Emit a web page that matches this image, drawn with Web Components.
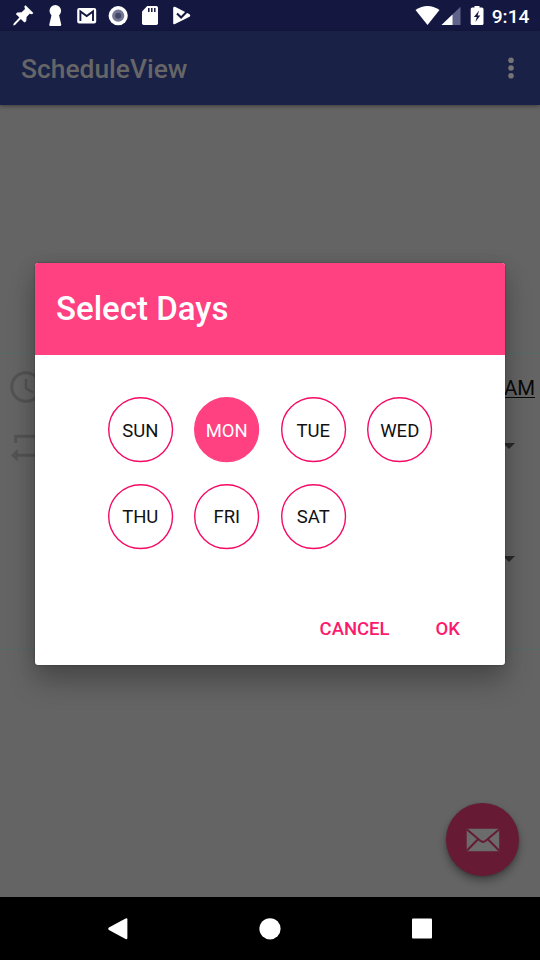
<!DOCTYPE html>
<html lang="en">
<head>
<meta charset="utf-8">
<title>ScheduleView</title>
<style>
html,body{margin:0;padding:0;background:#000}
body{width:540px;height:960px;overflow:hidden;font-family:Roboto,"Liberation Sans",sans-serif}
</style>
</head>
<body>
<schedule-app></schedule-app>
<script>
const define = (name, html) => customElements.define(name, class extends HTMLElement {
  constructor() {
    super();
    const t = document.createElement('template');
    t.innerHTML = html;
    this.attachShadow({mode: 'open'}).append(t.content.cloneNode(true));
  }
});

define('status-bar', `
<style>
:host{display:flex;justify-content:space-between;height:31px;background:#141840;color:#fff;padding-left:7px;padding-right:10.5px}
div{display:flex}
svg{display:block;height:31px;fill:#fff}
span{font-size:19.2px;line-height:33px;font-weight:500;margin-left:7px;white-space:nowrap}
</style>
<div>
<svg width="32" viewBox="7 0 32 31"><path d="M25.5 5.2L33.4 13L32 14.3L29.6 13.8L26.6 17L26.2 21.2L24.4 22.4L20.8 19L15 24.9L13.2 25.4L13.7 23.4L19.4 17.6L15.8 14.1L17.3 12.5L21.7 12.2L25 9L24.3 6.5Z"/></svg>
<svg width="32" viewBox="39 0 32 31"><circle cx="55.3" cy="10.8" r="5.8"/><path d="M51.8 14h7L61.2 24.5Q61.4 26 60 26H50.5Q49 26 49.3 24.5Z"/></svg>
<svg width="32" viewBox="71 0 32 31"><rect x="77.2" y="8" width="19" height="15.6" rx="2"/><path d="M80.4 21V11.4L86.7 16L93 11.4V21" fill="none" stroke="#141840" stroke-width="1.9"/></svg>
<svg width="32" viewBox="103 0 32 31"><circle cx="118.2" cy="15.7" r="9.6"/><circle cx="118.2" cy="15.7" r="6.1" fill="#737694"/><circle cx="118.2" cy="15.7" r="3" fill="#434766"/></svg>
<svg width="32" viewBox="135 0 32 31"><path d="M147.2 6H156.3Q158 6 158 7.8V23.3Q158 25 156.3 25H143.7Q142 25 142 23.3V11.4Z"/><path d="M148.8 8v4M151.8 8v4M154.8 8v4" stroke="#141840" stroke-width="1.5"/></svg>
<svg width="32" viewBox="167 0 32 31"><path d="M175 6.8Q173.2 6.4 173.2 8V23Q173.2 24.9 175 24L189.6 16.7Q191 15.5 189.6 14.3Z"/><path d="M177 13.4L181.1 17.4L190 8.5" fill="none" stroke="#141840" stroke-width="2.1"/></svg>
</div>
<div>
<svg width="70" viewBox="415.5 0 70 31"><path d="M416 10Q428 1.8 440 10L428 25Z"/><path d="M461 6.7V25H442Z" fill="#61648a"/><path d="M453 14.4V25H442Z"/><path d="M475 7.4V6h5v1.4h2.4q1.6 0 1.6 1.6v14.5q0 1.5-1.6 1.5h-9.6q-1.6 0-1.6-1.5V9q0-1.6 1.6-1.6Z"/><path d="M479.6 10.4L474.4 17H477.3L475.9 22L480.8 15.5H478.1Z" fill="#141840"/></svg>
<span>9:14</span>
</div>`);

define('app-bar', `
<style>
:host{display:flex;align-items:center;justify-content:space-between;height:74px;box-sizing:border-box;padding:2px 23px 0 21px;background:#1a2147;box-shadow:0 1px 4px #0006;z-index:1}
h1{margin:0;font-size:26.4px;font-weight:500;line-height:32px;color:#666;white-space:nowrap}
svg{display:block;fill:#747474}
</style>
<h1><slot></slot></h1>
<svg width="12" height="26" viewBox="0 0 12 26"><circle cx="6" cy="4.2" r="2.8"/><circle cx="6" cy="12" r="2.8"/><circle cx="6" cy="19.8" r="2.8"/></svg>`);

define('schedule-row', `
<style>:host{display:flex;justify-content:space-between;align-items:center;height:var(--h,58px);padding:0 5px 0 9px}</style>
<slot></slot>`);

define('caret-icon', `
<style>:host{display:block;margin-right:20px}svg{display:block;fill:#292929}</style>
<svg width="12" height="6" viewBox="0 0 12 6"><path d="M0 0H12L6 6Z"/></svg>`);

define('schedule-panel', `
<style>
:host{display:block;box-sizing:border-box;height:297px;border:solid #536a67;border-width:1px 0;padding-top:4px}
svg{display:block;fill:none;stroke:#535353;stroke-width:3}
span{font-size:20.4px;color:#0a0a0a;border-bottom:1px solid #0a0a0a;height:20px;line-height:22px;white-space:nowrap;margin-top:1px}
.repeat{--h:60px}
.third{--h:166px}
</style>
<schedule-row><svg width="34" height="34" viewBox="0 0 34 34"><circle cx="17" cy="17" r="14.3"/><path d="M17 9V18.3L24 22.5" stroke-width="2.4"/></svg><span>AM</span></schedule-row>
<schedule-row class="repeat"><svg width="34" height="34" viewBox="0 0 34 34"><path d="M6.7 14V7.3H28M7 26.2H28V20" /><path d="M2 26.2L8.7 20V32.4ZM26 1L32 7.3L26 13.6Z" fill="#535353" stroke="none"/></svg><caret-icon></caret-icon></schedule-row>
<schedule-row class="third"><i></i><caret-icon></caret-icon></schedule-row>`);

define('mail-fab', `
<style>
:host{display:grid;place-items:center;width:73px;height:73px;border-radius:50%;background:#661a33;box-shadow:0 5px 9px #0005,0 1px 3px #0003}
svg{display:block}
</style>
<svg width="34" height="24" viewBox="0 0 34 24"><rect x=".7" y=".8" width="32.5" height="22.4" rx="1" fill="#6b6b6b"/><path d="M1 1.5L14.3 12.8Q17 15 19.7 12.8L33 1.5M1 22.5L11.8 11.5M33 22.5L22.2 11.5" fill="none" stroke="#661a33" stroke-width="2"/></svg>`);

define('day-toggle', `
<style>
:host{display:grid;place-items:center;width:65.5px;height:65.5px;color:#111;font-size:18.5px;line-height:22px}
svg,span{grid-area:1/1}
span{padding-top:2px}
svg{display:block;overflow:visible;fill:none;stroke:#f50a64;stroke-width:1.4}
:host([selected]){color:#fff}
:host([selected]) svg{fill:#ff4081;stroke:#ff4081}
</style>
<svg width="65.5" height="65.5" viewBox="0 0 65.5 65.5"><circle cx="32.6" cy="32.6" r="31.9"/></svg>
<span><slot></slot></span>`);

define('flat-button', `
<style>:host{display:block;color:#fb1a6c;font-size:18.5px;line-height:22px;font-weight:500;white-space:nowrap}</style>
<slot></slot>`);

define('days-dialog', `
<style>
:host{display:flex;flex-direction:column;width:470px;height:402px;background:#fff;border-radius:3px;overflow:hidden;box-shadow:0 18px 28px #00000038,0 4px 20px #00000024,0 0 2px #0006}
header{height:92px;box-sizing:border-box;background:#ff4081;color:#fff;padding:26px 21px 0;font-size:33px;line-height:40px;font-weight:500;white-space:nowrap}
main{flex:1;display:grid;grid-template-columns:repeat(4,65.5px);grid-auto-rows:65.5px;gap:21px;padding:42px 0 0 72.5px}
footer{display:flex;justify-content:flex-end;gap:46px;padding:0 45px 25px 0}
</style>
<header><slot name="title"></slot></header>
<main><slot></slot></main>
<footer><slot name="actions"></slot></footer>`);

define('nav-bar', `
<style>
:host{display:flex;justify-content:center;align-items:center;gap:130px;height:63px;background:#000}
svg{display:block;fill:#fff}
</style>
<svg width="22" height="24" viewBox="0 0 22 24"><path d="M18.6 1.6Q20.4.8 20.4 2.5V21.1Q20.4 22.8 18.6 22L1.9 13Q.3 11.8 1.9 10.6Z"/></svg>
<svg width="22" height="22" viewBox="0 0 22 22"><circle cx="11" cy="10.8" r="10.6"/></svg>
<svg width="22" height="22" viewBox="0 0 22 22"><rect x="1" y=".6" width="20" height="20" rx="1"/></svg>`);

define('schedule-app', `
<style>
:host{display:flex;flex-direction:column;position:relative;width:540px;height:960px;background:#646464;overflow:hidden}
.content{flex:1;box-sizing:border-box;padding-top:248px}
mail-fab{position:absolute;right:21px;bottom:84px}
days-dialog{position:absolute;left:35px;top:263px;z-index:2}
</style>
<status-bar></status-bar>
<app-bar>ScheduleView</app-bar>
<div class="content"><schedule-panel></schedule-panel></div>
<nav-bar></nav-bar>
<mail-fab></mail-fab>
<days-dialog>
<span slot="title">Select Days</span>
<day-toggle>SUN</day-toggle><day-toggle selected>MON</day-toggle><day-toggle>TUE</day-toggle><day-toggle>WED</day-toggle><day-toggle>THU</day-toggle><day-toggle>FRI</day-toggle><day-toggle>SAT</day-toggle>
<flat-button slot="actions">CANCEL</flat-button><flat-button slot="actions">OK</flat-button>
</days-dialog>`);
</script>
</body>
</html>
